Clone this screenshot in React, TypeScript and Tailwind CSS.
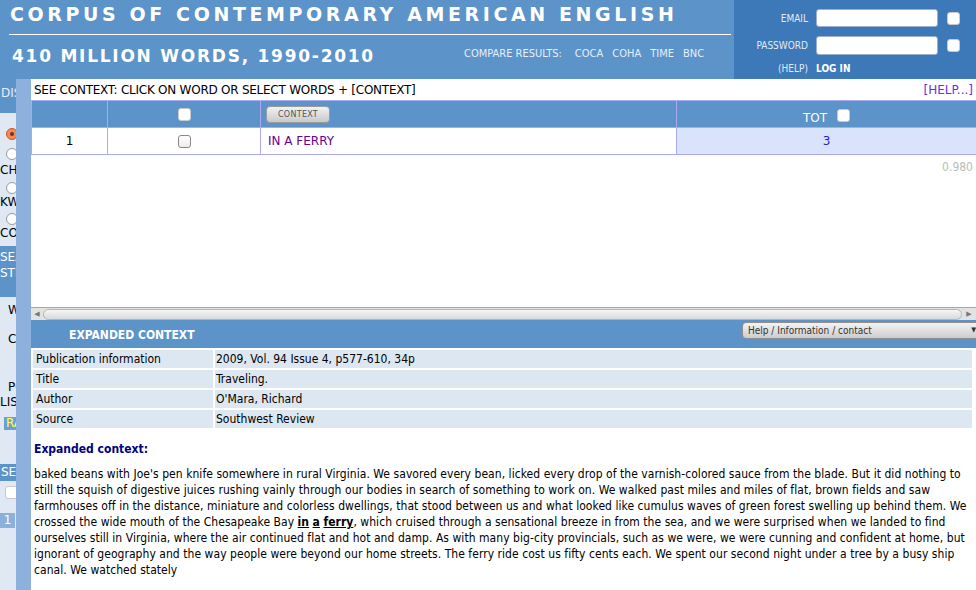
import React from 'react';

const Radio: React.FC<{ on?: boolean }> = ({ on }) =>
  on ? (
    <div className="w-[12px] h-[12px] rounded-full border border-[#c8562a] bg-[#f08a5a] flex items-center justify-center">
      <div className="w-[4px] h-[4px] rounded-full bg-[#8a2a10]" />
    </div>
  ) : (
    <div className="w-[12px] h-[12px] rounded-full border border-[#9a9a9a] bg-white" />
  );

const Check: React.FC<{ light?: boolean }> = ({ light }) => (
  <div
    className={
      light
        ? 'w-[13px] h-[13px] rounded-[3px] border border-[#c9c9c9] bg-white'
        : 'w-[13px] h-[13px] rounded-[3px] border border-[#8a8a8a] bg-gradient-to-b from-white to-[#ececec]'
    }
  />
);

const Sidebar: React.FC = () => (
  <div className="w-[16px] shrink-0 overflow-hidden bg-[#e0e9f3] text-[12px] leading-[14px] text-black whitespace-nowrap font-['DejaVu_Sans',sans-serif]">
    <div className="h-[34px] bg-[#5c93c9] text-[#e8eef8] pt-[7px] pl-[1px]">DISPLAY</div>
    <div className="mt-[15px] ml-[6px]"><Radio on /></div>
    <div className="mt-[8px] ml-[6px]"><Radio /></div>
    <div className="mt-[3px]">CHART</div>
    <div className="mt-[5px] ml-[6px]"><Radio /></div>
    <div className="mt-[1px]">KWIC</div>
    <div className="mt-[4px] ml-[6px]"><Radio /></div>
    <div className="mt-[1px]">COMPARE</div>
    <div className="mt-[6px] h-[51px] bg-[#5c93c9] text-white pt-[3px] leading-[16px]">
      <div>SEARCH</div>
      <div>STRING</div>
    </div>
    <div className="mt-[6px] pl-[8px]">WORD(S)</div>
    <div className="mt-[15px] pl-[8px]">COLLOCATES</div>
    <div className="mt-[34px] leading-[15px]">
      <div className="pl-[8px]">POS</div>
      <div>LIST</div>
    </div>
    <div className="mt-[7px] ml-[4px] h-[13px] bg-[#6f9fd0] text-[#ffff55] leading-[13px] pl-[2px]">RANDOM</div>
    <div className="mt-[34px] h-[17px] bg-[#5c93c9] text-white pl-[1px] leading-[17px]">SECTIONS</div>
    <div className="mt-[5px] ml-[5px]"><Check light /></div>
    <div className="mt-[14px] w-[15px] h-[15px] bg-[#8bb0db] text-white text-center leading-[15px]">1</div>
  </div>
);

const Header: React.FC = () => (
  <div className="flex h-[79px] shrink-0 font-['DejaVu_Sans',sans-serif]">
    <div className="w-[734px] bg-[#5c93c9] flex flex-col">
      <div className="h-[34px] pl-[10px] pt-[2px] text-[19px] leading-[24px] font-bold text-white tracking-[3.6px]">
        CORPUS OF CONTEMPORARY AMERICAN ENGLISH
      </div>
      <div className="h-px bg-white ml-[9px] w-[722px]" />
      <div className="flex">
        <div className="w-[464px] pl-[12px] mt-[10px] text-[17px] leading-[22px] font-bold text-white tracking-[1.75px]">
          410 MILLION WORDS, 1990-2010
        </div>
        <div className="mt-[12px] flex gap-[9px] text-[11px] leading-[14px] text-[#e6eef8] font-['DejaVu_Sans_Condensed','DejaVu_Sans',sans-serif]">
          <span className="mr-[4px]">COMPARE RESULTS:</span>
          <span>COCA</span>
          <span>COHA</span>
          <span>TIME</span>
          <span>BNC</span>
        </div>
      </div>
    </div>
    <div className="flex-1 bg-[#3d78b8] text-[10px] text-[#e3ebf5] font-['DejaVu_Sans_Condensed','DejaVu_Sans',sans-serif]">
      <div className="flex items-center mt-[9px] h-[18px]">
        <div className="w-[74px] text-right">EMAIL</div>
        <div className="ml-[8px] w-[122px] h-[18px] rounded-[3px] border border-[#9ab0cc] bg-white" />
        <div className="ml-[9px]"><Check light /></div>
      </div>
      <div className="flex items-center mt-[9px] h-[19px]">
        <div className="w-[74px] text-right">PASSWORD</div>
        <div className="ml-[8px] w-[122px] h-[19px] rounded-[3px] border border-[#9ab0cc] bg-white" />
        <div className="ml-[9px]"><Check light /></div>
      </div>
      <div className="flex items-center mt-[7px] h-[12px]">
        <div className="w-[74px] text-right">(HELP)</div>
        <div className="ml-[8px] font-bold text-white">LOG IN</div>
      </div>
    </div>
  </div>
);

const ResultsFrame: React.FC = () => (
  <div className="h-[241px] flex flex-col shrink-0 font-['DejaVu_Sans',sans-serif]">
    <div className="flex-1 overflow-hidden">
      <div className="h-[21px] flex items-center justify-between pl-[3px] pr-[3px]">
        <span className="tracking-[-0.25px]">SEE CONTEXT: CLICK ON WORD OR SELECT WORDS + [CONTEXT]</span>
        <span className="text-[#6a2ee8]">[HELP...]</span>
      </div>
      <table className="w-[946px] border-collapse">
        <tbody>
          <tr className="h-[27px] bg-[#5c93c9]">
            <td className="w-[76px] border border-[#aaaaf2]" />
            <td className="w-[153px] border border-[#aaaaf2]">
              <div className="flex justify-center"><Check light /></div>
            </td>
            <td className="w-[416px] border border-[#aaaaf2] pl-[5px]">
              <div className="w-[64px] h-[17px] rounded-[4px] border border-[#9a9a9a] bg-gradient-to-b from-[#f2f2f2] to-[#c9c9c9] text-[8px] leading-[15px] text-center text-[#555] tracking-[0.3px]">
                CONTEXT
              </div>
            </td>
            <td className="border border-[#aaaaf2]">
              <div className="flex justify-center items-center gap-[10px] text-white pt-[2px]">
                <span className="pt-[5px]">TOT</span>
                <Check light />
              </div>
            </td>
          </tr>
          <tr className="h-[27px]">
            <td className="border border-[#aaaaf2] text-center">1</td>
            <td className="border border-[#aaaaf2]">
              <div className="flex justify-center"><Check /></div>
            </td>
            <td className="border border-[#aaaaf2] pl-[7px] text-[#660099]">IN A FERRY</td>
            <td className="border border-[#aaaaf2] bg-[#d9e3fc] text-center text-[#2222cc]">3</td>
          </tr>
        </tbody>
      </table>
      <div className="mt-[4px] h-[16px] leading-[16px] text-right pr-[3px] text-[#bbbbbb] font-['DejaVu_Sans_Condensed',sans-serif]">
        0.980
      </div>
    </div>
    <div className="h-[13px] flex items-center border-t border-[#a6a6a6] bg-[#e2e2e2]">
      <div className="w-[12px] flex justify-center text-[7px] text-[#777]">◀</div>
      <div className="flex-1 h-[11px] rounded-full border border-[#b5b5b5] bg-gradient-to-b from-[#f6f6f6] to-[#d9d9d9]" />
      <div className="w-[14px] flex justify-center text-[7px] text-[#777]">▶</div>
    </div>
  </div>
);

const info: [string, string][] = [
  ['Publication information', '2009, Vol. 94 Issue 4, p577-610, 34p'],
  ['Title', 'Traveling.'],
  ['Author', "O'Mara, Richard"],
  ['Source', 'Southwest Review'],
];

const ContextFrame: React.FC = () => (
  <div className="flex-1 overflow-hidden font-['DejaVu_Sans_Condensed','DejaVu_Sans',sans-serif]">
    <div className="h-[28px] bg-[#5c93c9] flex">
      <div className="w-[711px] shrink-0 pl-[38px] pt-[6px] font-bold text-white">EXPANDED CONTEXT</div>
      <div className="mt-[2px] w-[240px] h-[17px] shrink-0 rounded-[4px] border border-[#8f8f8f] bg-gradient-to-b from-[#f3f3f3] to-[#cdcdcd] flex items-center justify-between pl-[5px] pr-[5px] text-[10px] text-[#333]">
        <span>Help / Information / contact</span>
        <span className="text-[7px]">▼</span>
      </div>
    </div>
    <table className="w-[943px] border-separate border-spacing-[2px]">
      <tbody>
        {info.map(([k, v]) => (
          <tr key={k} className="h-[18px]">
            <td className="w-[180px] bg-[#dde7f2] pl-[3px] leading-[18px]">{k}</td>
            <td className="bg-[#dde7f2] pl-[1px] leading-[18px]">{v}</td>
          </tr>
        ))}
      </tbody>
    </table>
    <div className="mt-[11px] pl-[3px] leading-[16px] font-bold text-[#000080]">Expanded context:</div>
    <p className="mt-[9px] pl-[3px] leading-[16px] whitespace-nowrap tracking-[0.05px]">
      baked beans with Joe's pen knife somewhere in rural Virginia. We savored every bean, licked every drop of the varnish-colored sauce from the blade. But it did nothing to
      <br />
      still the squish of digestive juices rushing vainly through our bodies in search of something to work on. We walked past miles and miles of flat, brown fields and saw
      <br />
      farmhouses off in the distance, miniature and colorless dwellings, that stood between us and what looked like cumulus waves of green forest swelling up behind them. We
      <br />
      crossed the wide mouth of the Chesapeake Bay <b className="underline">in</b> <b className="underline">a</b>{' '}
      <b className="underline">ferry</b>, which cruised through a sensational breeze in from the sea, and we were surprised when we landed to find
      <br />
      ourselves still in Virginia, where the air continued flat and hot and damp. As with many big-city provincials, such as we were, we were cunning and confident at home, but
      <br />
      ignorant of geography and the way people were beyond our home streets. The ferry ride cost us fifty cents each. We spent our second night under a tree by a busy ship
      <br />
      canal. We watched stately
    </p>
  </div>
);

export default function App() {
  return (
    <div className="w-[976px] h-[590px] overflow-hidden flex flex-col bg-white text-[12px] text-black font-['DejaVu_Sans',sans-serif]">
      <Header />
      <div className="flex flex-1 min-h-0">
        <Sidebar />
        <div className="w-[15px] shrink-0 bg-[#8db1dc]" />
        <div className="flex-1 min-w-0 flex flex-col overflow-hidden">
          <ResultsFrame />
          <ContextFrame />
        </div>
      </div>
    </div>
  );
}
